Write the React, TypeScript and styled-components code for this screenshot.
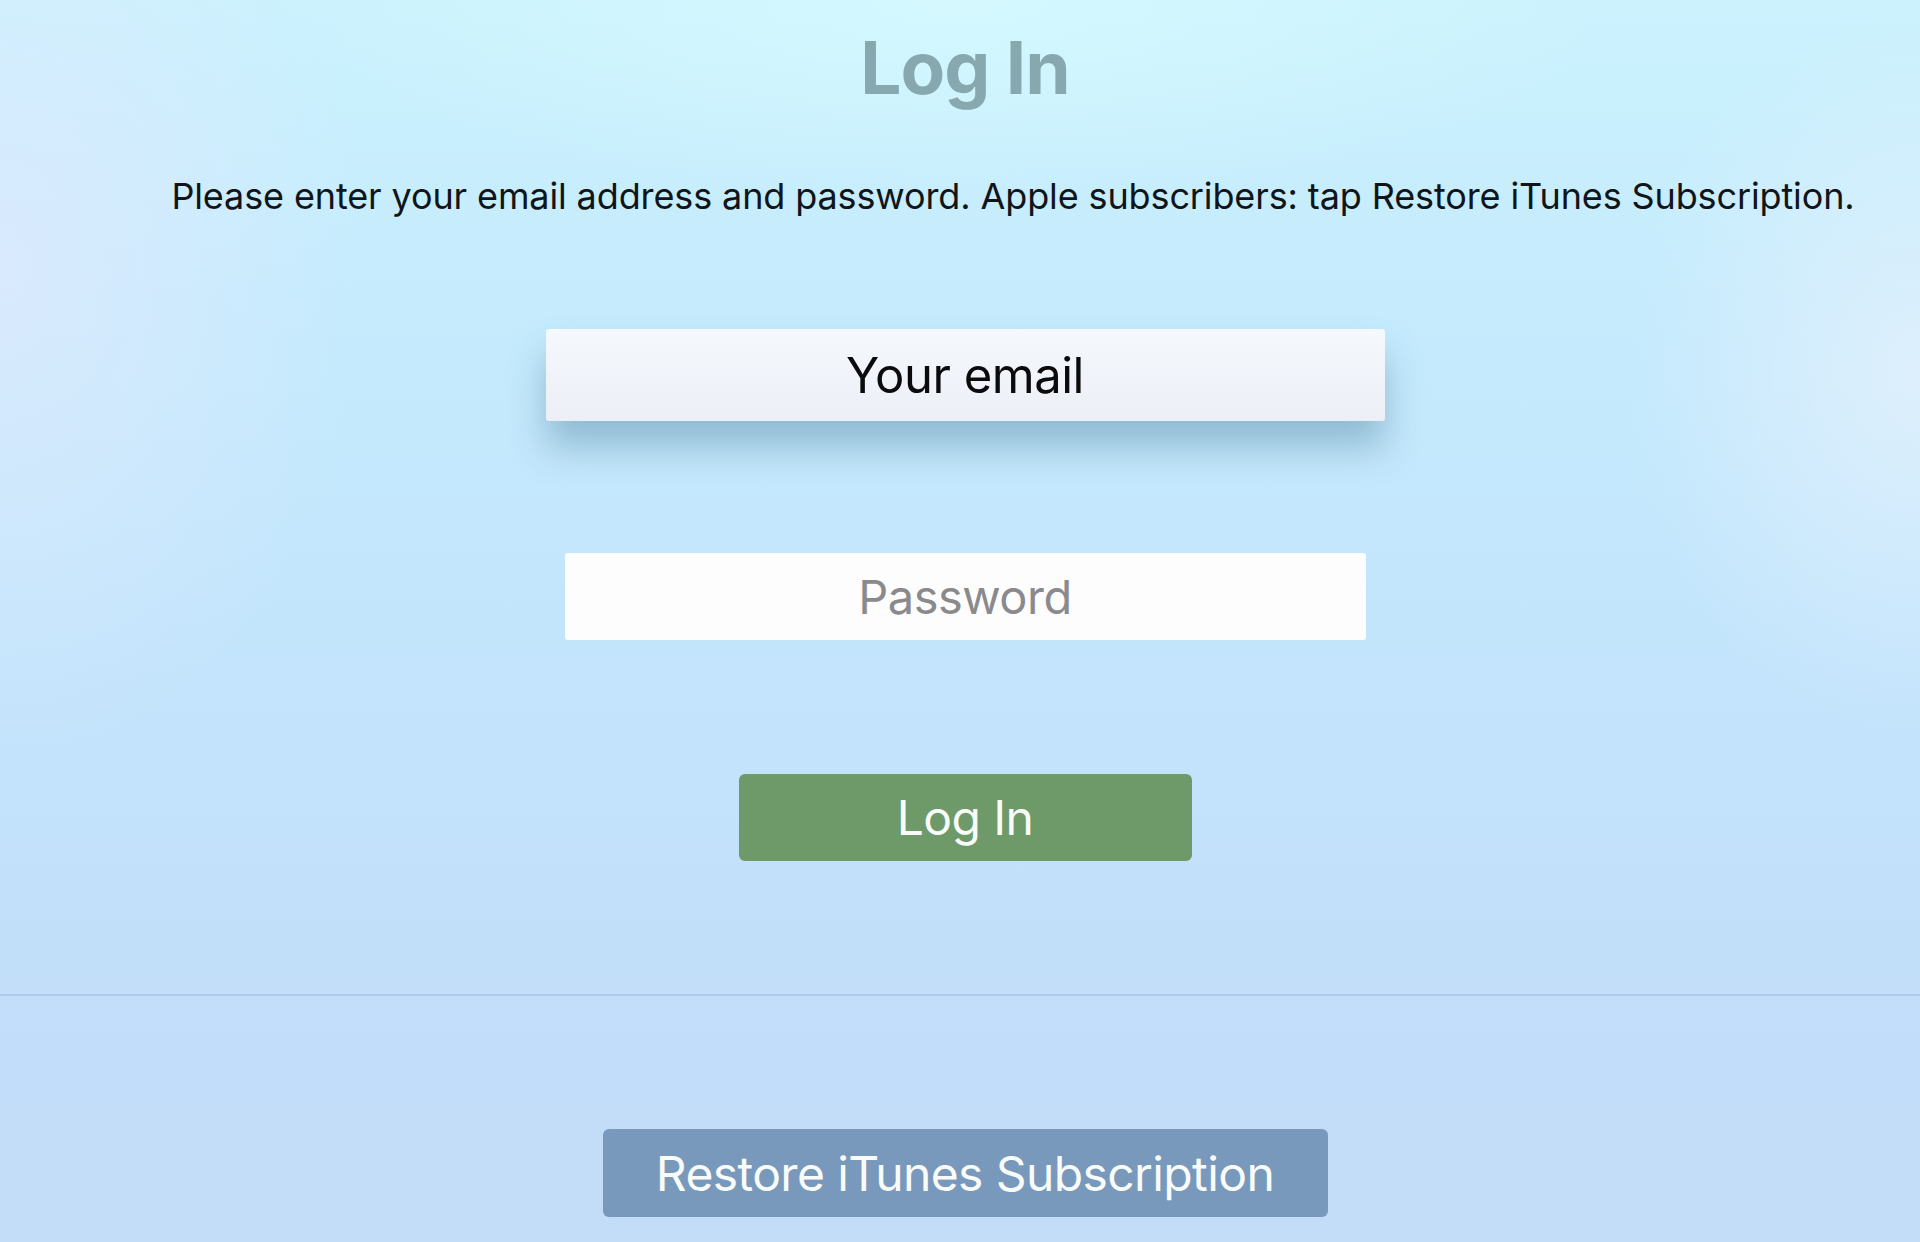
import React from 'react';
import styled, { createGlobalStyle } from 'styled-components';

const GlobalStyle = createGlobalStyle`
  html, body {
    margin: 0;
    padding: 0;
    height: 100%;
  }
  body {
    overflow: hidden;
    font-family: Inter, "Noto Sans", "Liberation Sans", sans-serif;
    -webkit-font-smoothing: antialiased;
  }
`;

const Screen = styled.div`
  box-sizing: border-box;
  width: 1920px;
  height: 1242px;
  padding-left: 10px;
  display: flex;
  flex-direction: column;
  align-items: center;
  overflow: hidden;
  background:
    radial-gradient(ellipse 520px 700px at 0% 22%, rgba(222, 233, 253, 0.8), rgba(222, 233, 253, 0) 70%),
    radial-gradient(ellipse 420px 520px at 100% 30%, rgba(226, 240, 252, 0.85), rgba(226, 240, 252, 0) 70%),
    radial-gradient(ellipse 900px 260px at 50% 0%, rgba(214, 249, 255, 0.9), rgba(214, 249, 255, 0) 75%),
    linear-gradient(to bottom, #cbf2fd 0%, #c5ebfd 25%, #c3e4fc 55%, #c2ddf9 85%, #c3dcf7 100%);
`;

const Title = styled.h1`
  margin: 31px 0 0;
  font-size: 73px;
  line-height: 73px;
  font-weight: 700;
  letter-spacing: -1px;
  color: #87a8ae;
`;

const Description = styled.p`
  margin: 74px 0 0;
  padding-left: 96px;
  font-size: 36px;
  line-height: 36px;
  font-weight: 400;
  letter-spacing: -0.12px;
  color: #111418;
  white-space: nowrap;
`;

const Field = styled.div<{ $focused?: boolean }>`
  display: flex;
  align-items: center;
  justify-content: center;
  box-sizing: border-box;
  width: ${({ $focused }) => ($focused ? '839px' : '801px')};
  height: ${({ $focused }) => ($focused ? '92px' : '87px')};
  margin-top: ${({ $focused }) => ($focused ? '115px' : '132px')};
  border-radius: 3px;
  background: ${({ $focused }) =>
    $focused ? 'linear-gradient(to bottom, #f5f8fd, #eceff5)' : '#fdfdfe'};
  box-shadow: ${({ $focused }) =>
    $focused ? '0 26px 36px rgba(60, 112, 145, 0.38)' : 'none'};
  font-size: ${({ $focused }) => ($focused ? '49px' : '47px')};
  letter-spacing: -0.5px;
  color: ${({ $focused }) => ($focused ? '#0b0b0d' : '#8a8a8d')};
`;

const Button = styled.button<{ $variant: 'green' | 'blue' }>`
  display: flex;
  align-items: center;
  justify-content: center;
  box-sizing: border-box;
  width: ${({ $variant }) => ($variant === 'green' ? '453px' : '725px')};
  height: ${({ $variant }) => ($variant === 'green' ? '87px' : '88px')};
  margin-top: ${({ $variant }) => ($variant === 'green' ? '134px' : '133px')};
  padding: 0;
  border: none;
  border-radius: 6px;
  background: ${({ $variant }) => ($variant === 'green' ? '#6d9a68' : '#7899bc')};
  color: #f8fbf8;
  font-family: inherit;
  font-size: 48px;
  letter-spacing: -0.6px;
  cursor: pointer;
`;

const Divider = styled.div`
  align-self: stretch;
  height: 2px;
  margin: 133px -10px 0 -10px;
  background: #afcae8;
`;

export default function App() {
  return (
    <>
      <GlobalStyle />
      <Screen>
        <Title>Log In</Title>
        <Description>
          Please enter your email address and password. Apple subscribers: tap Restore iTunes
          Subscription.
        </Description>
        <Field $focused>Your email</Field>
        <Field>Password</Field>
        <Button $variant="green">Log In</Button>
        <Divider />
        <Button $variant="blue">Restore iTunes Subscription</Button>
      </Screen>
    </>
  );
}
